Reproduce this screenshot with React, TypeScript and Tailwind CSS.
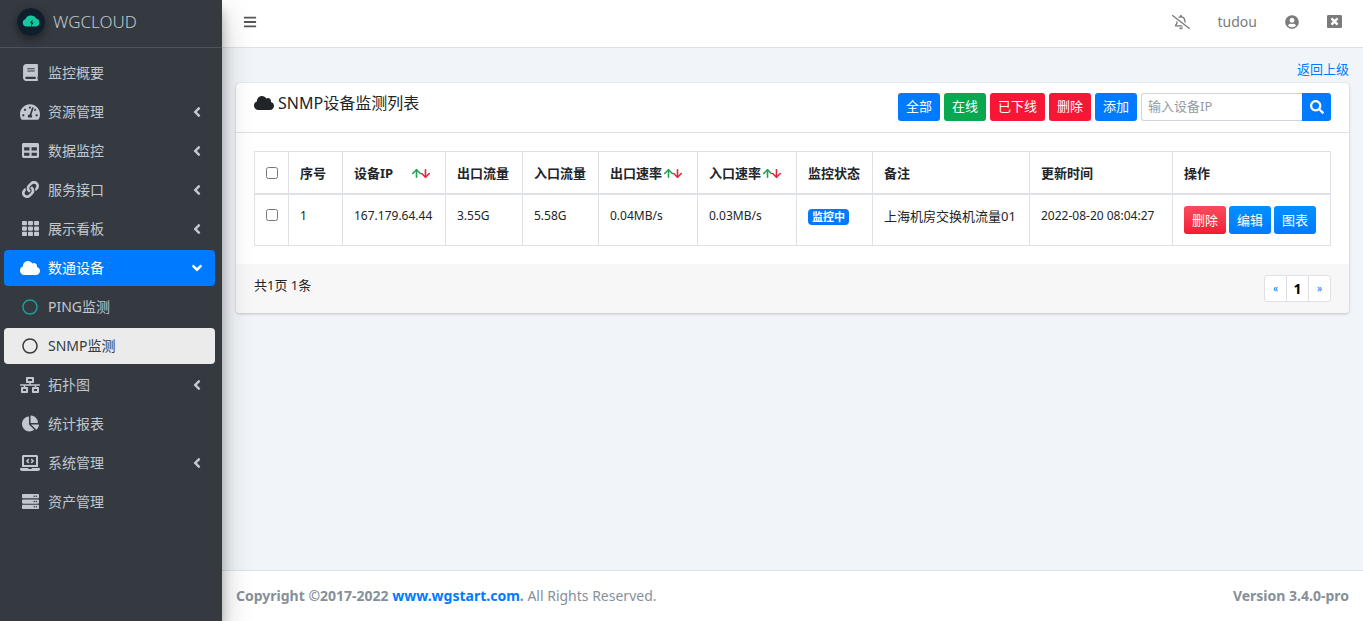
import { useState } from 'react';
import type { ReactNode } from 'react';
import clsx from 'clsx';
import { ArrowDown, ArrowUp } from 'lucide-react';
import type { IconType } from 'react-icons';
import {
    FaAngleDown,
    FaAngleLeft,
    FaBars,
    FaBook,
    FaChartPie,
    FaCloud,
    FaLaptopCode,
    FaLink,
    FaNetworkWired,
    FaRegBellSlash,
    FaRegCircle,
    FaSearch,
    FaServer,
    FaTable,
    FaTachometerAlt,
    FaTh,
    FaUserCircle,
    FaWindowClose,
} from 'react-icons/fa';

type MenuItem = {
    label: string;
    icon: IconType;
    wide?: boolean;
    arrow?: boolean;
    children?: string[];
};

const menu: MenuItem[] = [
    { label: '监控概要', icon: FaBook },
    { label: '资源管理', icon: FaTachometerAlt, wide: true, arrow: true },
    { label: '数据监控', icon: FaTable, arrow: true },
    { label: '服务接口', icon: FaLink, arrow: true },
    { label: '展示看板', icon: FaTh, arrow: true },
    { label: '数通设备', icon: FaCloud, wide: true, children: ['PING监测', 'SNMP监测'] },
    { label: '拓扑图', icon: FaNetworkWired, wide: true, arrow: true },
    { label: '统计报表', icon: FaChartPie },
    { label: '系统管理', icon: FaLaptopCode, wide: true, arrow: true },
    { label: '资产管理', icon: FaServer },
];

const devices = [
    {
        id: 1,
        ip: '167.179.64.44',
        outFlow: '3.55G',
        inFlow: '5.58G',
        outRate: '0.04MB/s',
        inRate: '0.03MB/s',
        status: '监控中',
        remark: '上海机房交换机流量01',
        updated: '2022-08-20 08:04:27',
    },
];

const btnColors = {
    blue: 'bg-[#007bff]',
    green: 'bg-[#09a84e]',
    red: 'bg-[#f71735]',
    redGradient: 'bg-linear-to-b from-[#f94a5c] to-[#f71735]',
    blueGradient: 'bg-linear-to-b from-[#0090ff] to-[#007bff]',
};

function Btn({ color, children }: { color: keyof typeof btnColors; children: ReactNode }) {
    return (
        <button type="button" className={clsx('h-7 shrink-0 rounded-[3px] px-2 text-[13px] text-white', btnColors[color])}>
            {children}
        </button>
    );
}

function SortArrows() {
    return (
        <span className="flex">
            <ArrowUp size={13} strokeWidth={3} className="-mr-1 text-[#28a055]" />
            <ArrowDown size={13} strokeWidth={3} className="text-[#e3263c]" />
        </span>
    );
}

function Th({ children, sort, spread }: { children: ReactNode; sort?: boolean; spread?: boolean }) {
    return (
        <th className="border border-b-2 border-[#dee2e6] pt-[11px] pb-[10px] pl-[11px] text-left font-bold whitespace-nowrap">
            {sort ? (
                <span className={clsx('flex items-center', spread && 'justify-between pr-[13px]')}>
                    {children}
                    <SortArrows />
                </span>
            ) : (
                children
            )}
        </th>
    );
}

function Td({ children, latin }: { children: ReactNode; latin?: boolean }) {
    return (
        <td className={clsx('border border-[#dee2e6] py-[11px] pl-[11px] align-top whitespace-nowrap', latin && 'text-xs leading-5')}>
            {children}
        </td>
    );
}

function Logo() {
    return (
        <svg viewBox="0 0 28 28" className="size-7 rounded-full shadow-[0_3px_8px_rgba(0,0,0,0.45)]" aria-hidden="true">
            <circle cx="14" cy="14" r="14" fill="#101d2b" />
            <path
                d="M9.2 18.4a3.7 3.7 0 0 1-.9-7.2A6 6 0 0 1 19.2 10.6a4 4 0 0 1 .2 7.8Z"
                fill="#14c9a0"
            />
            <path d="M15.6 11.4 13 14.8h1.4l-.4 4 2.6-4.4h-1.5Z" fill="#101d2b" />
        </svg>
    );
}

function Sidebar() {
    const [current, setCurrent] = useState('SNMP监测');

    return (
        <aside className="z-10 w-[222px] shrink-0 bg-[#343a40] text-[#c2c7d0] shadow-[0_14px_28px_rgba(0,0,0,0.25),0_10px_10px_rgba(0,0,0,0.22)]">
            <a href="#" className="flex h-12 items-center gap-2 border-b border-[#4b545c] pb-1 pl-[17px] text-[17px] font-light">
                <Logo />
                WGCLOUD
            </a>
            <nav className="pt-[7px] pr-[7px] pl-1 text-sm">
                <ul className="flex flex-col gap-[3px]">
                    {menu.map(({ label, icon: Icon, wide, arrow, children }) => (
                        <li key={label}>
                            <a
                                href="#"
                                className={clsx('flex h-9 items-center rounded pr-[10px] pl-4', children && 'bg-[#007bff] text-white')}
                            >
                                <span className="mr-2 flex w-5 justify-center pb-px">
                                    <Icon size={wide ? 20 : 17} className="shrink-0" />
                                </span>
                                <span className="flex-1">{label}</span>
                                {arrow && <FaAngleLeft size={16} />}
                                {children && <FaAngleDown size={16} />}
                            </a>
                            {children && (
                                <ul className="mt-[3px] flex flex-col gap-[3px]">
                                    {children.map((child) => (
                                        <li key={child}>
                                            <a
                                                href="#"
                                                onClick={() => setCurrent(child)}
                                                className={clsx(
                                                    'flex h-9 items-center rounded pl-4',
                                                    child === current && 'bg-[#ebebeb] text-[#343a40]'
                                                )}
                                            >
                                                <span className="mr-2 flex w-5 justify-center pb-px">
                                                    <FaRegCircle size={16} className={clsx(child !== current && 'text-[#1f9c9c]')} />
                                                </span>
                                                {child}
                                            </a>
                                        </li>
                                    ))}
                                </ul>
                            )}
                        </li>
                    ))}
                </ul>
            </nav>
        </aside>
    );
}

function TopBar() {
    return (
        <header className="flex h-12 items-center justify-between border-b border-[#dee2e6] bg-white pr-[21px] pb-1 pl-[21px] text-[#7b7b7b]">
            <button type="button" aria-label="菜单" className="text-[#555]">
                <FaBars size={14} />
            </button>
            <div className="flex items-center gap-7 text-sm">
                <button type="button" aria-label="告警通知">
                    <FaRegBellSlash size={18} />
                </button>
                <a href="#">tudou</a>
                <button type="button" aria-label="账号">
                    <FaUserCircle size={14} />
                </button>
                <button type="button" aria-label="退出">
                    <FaWindowClose size={15} />
                </button>
            </div>
        </header>
    );
}

function DeviceTable() {
    return (
        <table className="w-full table-fixed border-collapse leading-5">
            <colgroup>
                <col className="w-[34px]" />
                <col className="w-[54px]" />
                <col className="w-[103px]" />
                <col className="w-[77px]" />
                <col className="w-[76px]" />
                <col className="w-[99px]" />
                <col className="w-[99px]" />
                <col className="w-[76px]" />
                <col className="w-[157px]" />
                <col className="w-[143px]" />
                <col className="w-[158px]" />
            </colgroup>
            <thead>
                <tr>
                    <Th>
                        <input type="checkbox" aria-label="全选" className="block size-3" />
                    </Th>
                    <Th>序号</Th>
                    <Th sort spread>设备IP</Th>
                    <Th>出口流量</Th>
                    <Th>入口流量</Th>
                    <Th sort>出口速率</Th>
                    <Th sort>入口速率</Th>
                    <Th>监控状态</Th>
                    <Th>备注</Th>
                    <Th>更新时间</Th>
                    <Th>操作</Th>
                </tr>
            </thead>
            <tbody>
                {devices.map((d) => (
                    <tr key={d.id}>
                        <Td>
                            <input type="checkbox" aria-label={d.ip} className="mt-[3px] block size-3" />
                        </Td>
                        <Td latin>{d.id}</Td>
                        <Td latin>{d.ip}</Td>
                        <Td latin>{d.outFlow}</Td>
                        <Td latin>{d.inFlow}</Td>
                        <Td latin>{d.outRate}</Td>
                        <Td latin>{d.inRate}</Td>
                        <Td>
                            <span className="mt-[3px] block w-fit rounded bg-[#007bff] px-1 text-[11px] leading-4 font-bold text-white">
                                {d.status}
                            </span>
                        </Td>
                        <Td>{d.remark}</Td>
                        <Td latin>{d.updated}</Td>
                        <Td>
                            <div className="flex gap-[3px]">
                                <Btn color="redGradient">删除</Btn>
                                <Btn color="blueGradient">编辑</Btn>
                                <Btn color="blueGradient">图表</Btn>
                            </div>
                        </Td>
                    </tr>
                ))}
            </tbody>
        </table>
    );
}

function Pagination() {
    return (
        <nav aria-label="分页" className="flex h-[27px] divide-x divide-[#dee2e6] overflow-hidden rounded-[3px] border border-[#dee2e6] bg-white text-[10px] text-[#007bff]">
            <a href="#" className="flex w-[22px] items-center justify-center">«</a>
            <a href="#" className="flex w-[22px] items-center justify-center text-sm font-bold text-black">1</a>
            <a href="#" className="flex w-[21px] items-center justify-center">»</a>
        </nav>
    );
}

export default function App() {
    const [keyword, setKeyword] = useState('');

    return (
        <div className="flex min-h-screen bg-[#f1f4f8] font-['Noto_Sans','Noto_Sans_CJK_SC',sans-serif] text-[13px] text-[#212529]">
            <Sidebar />
            <div className="flex min-w-0 flex-1 flex-col">
                <TopBar />
                <main className="flex flex-1 flex-col px-[14px] pt-[11px]">
                    <a href="#" className="self-end leading-5 text-[#007bff]">返回上级</a>

                    <section className="mt-1 overflow-hidden rounded bg-white shadow-[0_0_1px_rgba(0,0,0,0.13),0_1px_3px_rgba(0,0,0,0.2)]">
                        <div className="flex items-start justify-between border-b border-[#dee2e6] px-[18px] pt-[10px] pb-[11px]">
                            <h3 className="flex items-center gap-1 text-base leading-5">
                                <FaCloud size={20} />
                                SNMP设备监测列表
                            </h3>
                            <form className="flex gap-1" onSubmit={(e) => e.preventDefault()}>
                                <Btn color="blue">全部</Btn>
                                <Btn color="green">在线</Btn>
                                <Btn color="red">已下线</Btn>
                                <Btn color="red">删除</Btn>
                                <Btn color="blue">添加</Btn>
                                <div className="flex h-7">
                                    <input
                                        type="text"
                                        aria-label="输入设备IP"
                                        placeholder="输入设备IP"
                                        value={keyword}
                                        onChange={(e) => setKeyword(e.target.value)}
                                        className="w-[161px] rounded-l-[3px] border border-r-0 border-[#ced4da] px-[6px] placeholder:text-[#939ba2]"
                                    />
                                    <button type="submit" aria-label="搜索" className="flex w-[29px] items-center justify-center rounded-r-[3px] bg-[#007bff] text-white">
                                        <FaSearch size={14} />
                                    </button>
                                </div>
                            </form>
                        </div>
                        <div className="p-[18px]">
                            <DeviceTable />
                        </div>
                        <div className="flex items-start justify-between bg-[#f7f7f7] px-[18px] py-[11px]">
                            <span className="leading-5">共1页 1条</span>
                            <Pagination />
                        </div>
                    </section>
                </main>
                <footer className="flex items-center justify-between border-t border-[#dee2e6] bg-white px-[14px] py-[15px] text-sm leading-5 text-[#869099]">
                    <p>
                        <strong>
                            Copyright ©2017-2022 <a href="#" className="text-[#007bff]">www.wgstart.com</a>.
                        </strong>{' '}
                        All Rights Reserved.
                    </p>
                    <strong>Version 3.4.0-pro</strong>
                </footer>
            </div>
        </div>
    );
}
